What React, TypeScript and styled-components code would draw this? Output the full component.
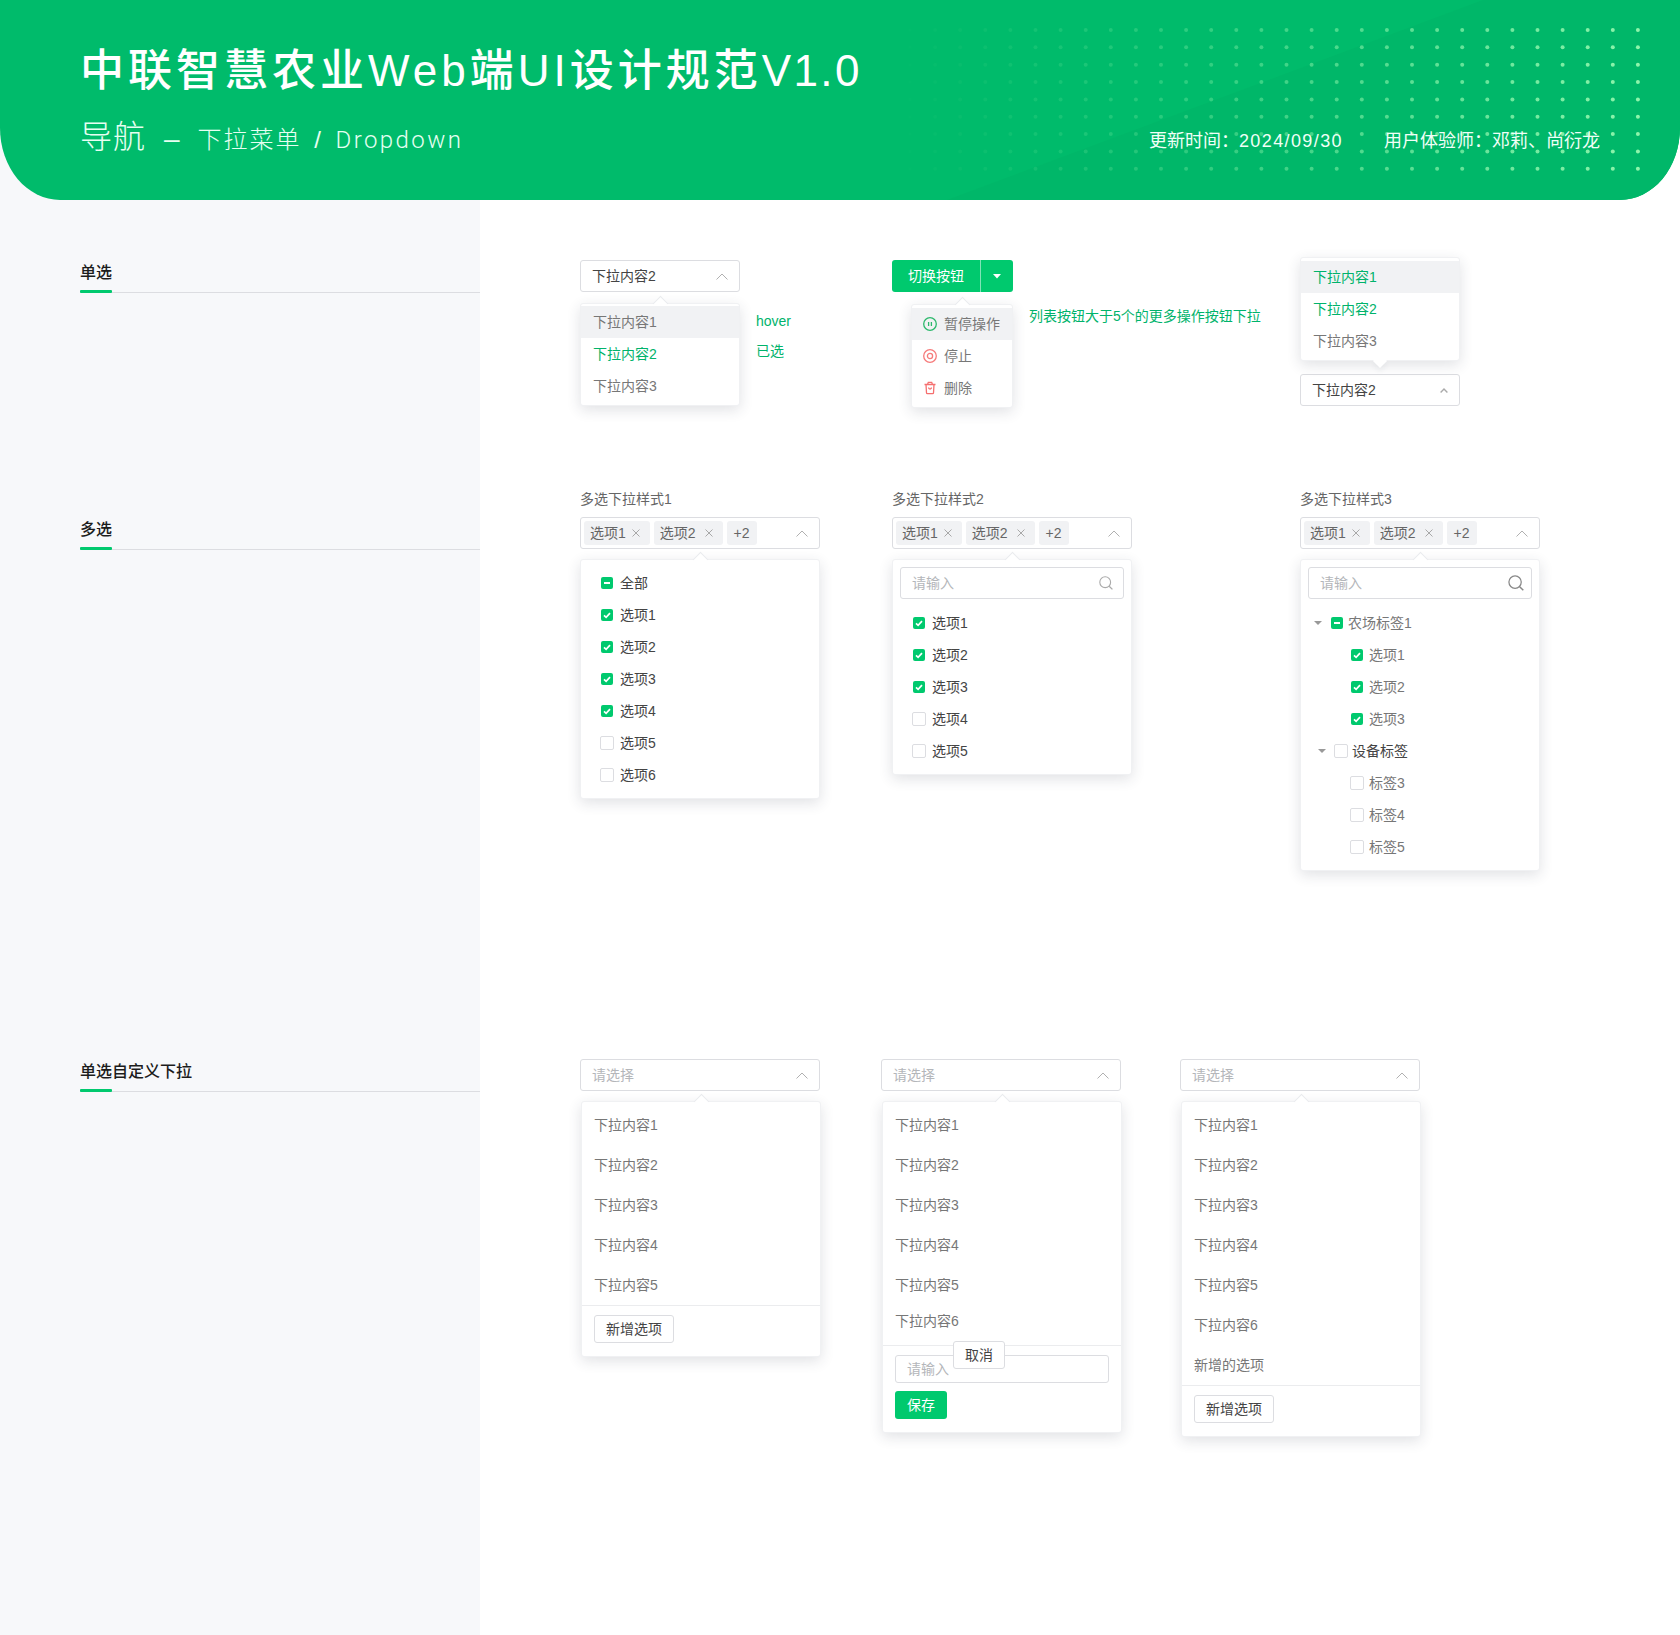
import React from "react";
import styled, { createGlobalStyle } from "styled-components";

const GREEN = "#00c96e";
const TEXT_GREEN = "#00b36b";

const GlobalStyle = createGlobalStyle`
	html, body {
		margin: 0;
		padding: 0;
		background: #fff;
	}
	* {
		box-sizing: border-box;
	}
	body {
		font-family: "Liberation Sans", "Noto Sans CJK SC", sans-serif;
		font-size: 14px;
		line-height: 20px;
		color: #444;
	}
`;

const Page = styled.div`
	width: 1680px;
	height: 1635px;
	overflow: hidden;
	background: linear-gradient(to right, #f7f8fa 480px, #fff 480px);
`;

const Header = styled.header`
	position: relative;
	height: 200px;
	padding-top: 43px;
	border-radius: 0 0 60px 60px / 0 0 72px 72px;
	background: #00bb6b;
	color: #fff;
	overflow: hidden;
`;

const Decor = styled.svg`
	position: absolute;
	top: 0;
	left: 0;
`;

const Title = styled.h1`
	position: relative;
	margin: 0;
	padding-left: 80px;
	font-size: 44px;
	line-height: 56px;
	font-weight: 500;
	letter-spacing: 4px;

	em {
		font-style: normal;
		letter-spacing: 2.4px;
	}
`;

const SubRow = styled.div`
	position: relative;
	display: flex;
	align-items: flex-start;
	justify-content: space-between;
	padding: 0 80px;
`;

const SubTitle = styled.div`
	display: flex;
	align-items: baseline;
	font-size: 24px;
	line-height: 76px;
	letter-spacing: 2px;
	word-spacing: 4px;
	white-space: pre;
	font-weight: 300;
	color: #e6fff2;

	b {
		font-size: 32px;
		font-weight: 300;
		letter-spacing: 1px;
		margin-right: 18px;
	}
	i {
		font-style: normal;
		font-size: 28px;
		margin-right: 16px;
	}
	em {
		font-family: Roboto, "Liberation Sans", sans-serif;
		font-style: normal;
		font-weight: 300;
		letter-spacing: 2.4px;
	}
`;

const Meta = styled.div`
	display: flex;
	gap: 41px;
	font-size: 18px;
	line-height: 84px;
	color: #f0fff7;

	em {
		font-style: normal;
		letter-spacing: 1.4px;
	}
`;

const Section = styled.section<{ $height: number; $side: number; $main: number }>`
	display: grid;
	grid-template-columns: 480px 1fr;
	height: ${(p) => p.$height}px;

	& > aside {
		padding: ${(p) => p.$side}px 0 0 80px;
	}
	& > main {
		padding: ${(p) => p.$main}px 0 0 100px;
	}
`;

const SideTitle = styled.h2`
	position: relative;
	height: 33px;
	margin: 0;
	font-size: 16px;
	line-height: 25px;
	font-weight: 500;
	color: #1c1c1c;
	border-bottom: 1px solid #dcdde1;

	&::after {
		content: "";
		position: absolute;
		left: 0;
		bottom: -1px;
		width: 32px;
		height: 3px;
		border-radius: 1px;
		background: ${GREEN};
	}
`;

const Columns = styled.div<{ $cols: string }>`
	display: grid;
	grid-template-columns: ${(p) => p.$cols};
	align-items: start;
`;

const Inline = styled.div`
	display: flex;
	align-items: flex-start;
`;

const Stack = styled.div<{ $width: number; $gap?: number; $top?: number }>`
	display: flex;
	flex-direction: column;
	gap: ${(p) => p.$gap ?? 0}px;
	width: ${(p) => p.$width}px;
	margin-top: ${(p) => p.$top ?? 0}px;
`;

const Notes = styled.div<{ $top: number }>`
	margin: ${(p) => p.$top}px 0 0 16px;
	color: ${TEXT_GREEN};
	line-height: 22px;

	p {
		margin: 0 0 8px;
	}
`;

const FieldLabel = styled.div`
	height: 22px;
	margin-bottom: 7px;
	line-height: 22px;
	color: #666;
`;

const SelectBox = styled.div<{ $placeholder?: boolean }>`
	display: flex;
	align-items: center;
	justify-content: space-between;
	height: 32px;
	padding: 0 11px;
	border: 1px solid #dcdde1;
	border-radius: 3px;
	background: #fff;
	color: ${(p) => (p.$placeholder ? "#b4b6ba" : "#444")};
`;

const TagBox = styled(SelectBox)`
	padding: 0 11px 0 3px;
`;

const Tags = styled.div`
	display: flex;
	gap: 4px;
`;

const Tag = styled.span<{ $gap?: number }>`
	display: flex;
	align-items: center;
	gap: ${(p) => p.$gap ?? 6}px;
	height: 24px;
	padding: 0 10px 0 6px;
	border-radius: 3px;
	background: #f1f2f4;
	color: #666;
`;

const CountTag = styled(Tag)`
	padding: 0 7px;
`;

const Menu = styled.div<{ $left?: number; $width: number; $top?: number; $pad?: string; $up?: boolean }>`
	position: relative;
	width: ${(p) => p.$width}px;
	margin-left: ${(p) => p.$left ?? 0}px;
	margin-top: ${(p) => p.$top ?? 10}px;
	padding: ${(p) => p.$pad ?? "2px 0 3px"};
	border: 1px solid #f0f1f3;
	border-radius: 3px;
	background: #fff;
	box-shadow: 0 4px 14px rgba(40, 50, 70, 0.14);

	&::before {
		content: "";
		position: absolute;
		left: 50%;
		width: 10px;
		height: 10px;
		margin-left: -5px;
		background: #fff;
		transform: rotate(45deg);
		${(p) =>
			p.$up
				? "bottom: -6px; box-shadow: 3px 3px 5px rgba(40, 50, 70, 0.05);"
				: "top: -6px; border-left: 1px solid #eaebee; border-top: 1px solid #eaebee;"}
	}
`;

const Item = styled.div<{ $hover?: boolean; $active?: boolean; $h?: number; $pad?: number; $after?: number }>`
	position: relative;
	display: flex;
	align-items: center;
	gap: 7px;
	height: ${(p) => p.$h ?? 32}px;
	margin-bottom: ${(p) => p.$after ?? 0}px;
	padding-left: ${(p) => p.$pad ?? 12}px;
	background: ${(p) => (p.$hover ? "#f1f2f4" : "transparent")};
	color: ${(p) => (p.$active ? TEXT_GREEN : "#777")};
`;

const SplitButton = styled.div`
	display: flex;
	width: 121px;
	height: 32px;
	border-radius: 3px;
	background: ${GREEN};
	color: #fff;
`;

const SplitLabel = styled.div`
	display: flex;
	align-items: center;
	justify-content: center;
	width: 89px;
	border-right: 1px solid rgba(255, 255, 255, 0.5);
`;

const SplitCaret = styled.div`
	display: flex;
	flex: 1;
	align-items: center;
	justify-content: center;
`;

const CheckRow = styled.div<{ $pad: number; $gap?: number; $muted?: boolean }>`
	display: flex;
	align-items: center;
	gap: ${(p) => p.$gap ?? 6}px;
	height: 32px;
	padding-left: ${(p) => p.$pad}px;
	color: ${(p) => (p.$muted ? "#777" : "#444")};
`;

const CheckSlot = styled.span`
	display: flex;
	align-items: center;
	justify-content: center;
	width: 14px;
	height: 14px;
`;

const EmptyBox = styled.span`
	width: 14px;
	height: 14px;
	border: 1px solid #dcdde1;
	border-radius: 2px;
	background: #fff;
`;

const FilledBox = styled.span`
	display: flex;
	align-items: center;
	justify-content: center;
	width: 12px;
	height: 12px;
	border-radius: 2px;
	background: ${GREEN};
`;

const TreeCaret = styled.span`
	width: 0;
	height: 0;
	margin-right: 4px;
	border-left: 4px solid transparent;
	border-right: 4px solid transparent;
	border-top: 4px solid #999;
`;

const SearchBox = styled.div<{ $right: number }>`
	display: flex;
	align-items: center;
	justify-content: space-between;
	width: 224px;
	height: 32px;
	margin: 0 0 8px 7px;
	padding: 0 ${(p) => p.$right}px 0 11px;
	border: 1px solid #dcdde1;
	border-radius: 3px;
	color: #b4b6ba;
`;

const Footer = styled.div`
	position: relative;
	display: flex;
	flex-direction: column;
	align-items: flex-start;
	gap: 8px;
	padding: 9px 12px 13px;
	border-top: 1px solid #ebecee;
`;

const GhostButton = styled.div`
	display: flex;
	align-items: center;
	justify-content: center;
	height: 28px;
	padding: 0 11px;
	border: 1px solid #dcdde1;
	border-radius: 3px;
	background: #fff;
	color: #444;
`;

const CancelButton = styled(GhostButton)`
	position: absolute;
	top: -5px;
	left: 70px;
	width: 52px;
`;

const SaveButton = styled(GhostButton)`
	width: 52px;
	border: 0;
	background: ${GREEN};
	color: #fff;
`;

const TextInput = styled.div`
	display: flex;
	align-items: center;
	width: 214px;
	height: 28px;
	padding-left: 11px;
	border: 1px solid #dcdde1;
	border-radius: 3px;
	color: #b4b6ba;
`;

const Chevron = ({ small }: { small?: boolean }) =>
	small ? (
		<svg width="8" height="5" viewBox="0 0 8 5" fill="none">
			<path d="M0.6 4.4 4 1 7.4 4.4" stroke="#aaa" strokeWidth="1.4" />
		</svg>
	) : (
		<svg width="12" height="7" viewBox="0 0 12 7" fill="none">
			<path d="M0.5 6.5 6 1 11.5 6.5" stroke="#b0b0b0" strokeWidth="1" />
		</svg>
	);

const Cross = () => (
	<svg width="8" height="8" viewBox="0 0 8 8" fill="none">
		<path d="M0.5 0.5 7.5 7.5M7.5 0.5 0.5 7.5" stroke="#a8a8a8" strokeWidth="1" />
	</svg>
);

const Tick = () => (
	<svg width="8" height="7" viewBox="0 0 8 7" fill="none">
		<path d="M1 3.4 3.1 5.4 7 1.2" stroke="#fff" strokeWidth="1.7" />
	</svg>
);

const Minus = () => (
	<svg width="6" height="2" viewBox="0 0 6 2">
		<rect width="6" height="2" fill="#fff" />
	</svg>
);

const SearchIcon = ({ size, color }: { size: number; color: string }) => (
	<svg width={size} height={size} viewBox="0 0 14 14" fill="none">
		<circle cx="6.2" cy="6.2" r="5.4" stroke={color} strokeWidth="1.1" />
		<path d="M10.2 10.2 13.4 13.4" stroke={color} strokeWidth="1.3" />
	</svg>
);

const PauseIcon = () => (
	<svg width="14" height="14" viewBox="0 0 14 14" fill="none">
		<circle cx="7" cy="7" r="6.3" stroke="#2cb86c" strokeWidth="1.3" />
		<path d="M5.6 5v4M8.4 5v4" stroke="#2cb86c" strokeWidth="1.3" />
	</svg>
);

const StopIcon = () => (
	<svg width="14" height="14" viewBox="0 0 14 14" fill="none">
		<circle cx="7" cy="7" r="6.3" stroke="#f67b7b" strokeWidth="1.3" />
		<circle cx="7" cy="7" r="2.6" stroke="#f67b7b" strokeWidth="1.3" />
	</svg>
);

const TrashIcon = () => (
	<svg width="14" height="14" viewBox="0 0 14 14" fill="none">
		<path
			d="M1.5 3.5h11M4.5 3.5l.8-2.2h3.4l.8 2.2M3 3.5l.5 8.2c0 .6.5 1 1 1h5c.5 0 1-.4 1-1l.5-8.2M5.6 6.5c0 2 2.8 2 2.8 0"
			stroke="#f56f6f"
			strokeWidth="1.3"
		/>
	</svg>
);

const HeaderDecor = () => {
	const cols = Array.from({ length: 30 }, (_, i) => 910 + i * 25.1);
	const rows = Array.from({ length: 9 }, (_, i) => 30 + i * 17.35);
	return (
		<Decor width="1680" height="200" viewBox="0 0 1680 200">
			<polygon points="947,200 1483,0 1680,0 1680,200" fill="#00b769" />
			{rows.map((y) =>
				cols.map((x) => (
					<circle
						key={`${x}-${y}`}
						cx={x}
						cy={y}
						r="2"
						fill="#8ff5ac"
						opacity={Math.min(1, Math.pow((x - 885) / 755, 1.25))}
					/>
				))
			)}
		</Decor>
	);
};

type Check = "on" | "off" | "part";

const CheckMark = ({ state }: { state: Check }) => (
	<CheckSlot>
		{state === "off" ? (
			<EmptyBox />
		) : (
			<FilledBox>{state === "on" ? <Tick /> : <Minus />}</FilledBox>
		)}
	</CheckSlot>
);

const MultiSelect = () => (
	<TagBox>
		<Tags>
			<Tag>
				选项1 <Cross />
			</Tag>
			<Tag $gap={9}>
				选项2 <Cross />
			</Tag>
			<CountTag>+2</CountTag>
		</Tags>
		<Chevron />
	</TagBox>
);

const plainChecks: [string, Check][] = [
	["全部", "part"],
	["选项1", "on"],
	["选项2", "on"],
	["选项3", "on"],
	["选项4", "on"],
	["选项5", "off"],
	["选项6", "off"],
];

const searchChecks: [string, Check][] = [
	["选项1", "on"],
	["选项2", "on"],
	["选项3", "on"],
	["选项4", "off"],
	["选项5", "off"],
];

const treeChildrenA: [string, Check][] = [
	["选项1", "on"],
	["选项2", "on"],
	["选项3", "on"],
];

const treeChildrenB: [string, Check][] = [
	["标签3", "off"],
	["标签4", "off"],
	["标签5", "off"],
];

const OptionList = ({ count, extra }: { count: number; extra?: string }) => (
	<>
		{Array.from({ length: count }, (_, i) => (
			<Item key={i} $h={40}>
				下拉内容{i + 1}
			</Item>
		))}
		{extra && <Item $h={40}>{extra}</Item>}
	</>
);

const App = () => (
	<Page>
		<GlobalStyle />
		<Header>
			<HeaderDecor />
			<Title>
				中联智慧农业Web端UI设计规范<em>V1.0</em>
			</Title>
			<SubRow>
				<SubTitle>
					<b>导航</b>
					<i>–</i>
					<span>下拉菜单 / </span>
					<em>Dropdown</em>
				</SubTitle>
				<Meta>
					<span>
						更新时间：<em>2024/09/30</em>
					</span>
					<span>用户体验师：邓莉、尚衍龙</span>
				</Meta>
			</SubRow>
		</Header>

		<Section $height={280} $side={60} $main={60}>
			<aside>
				<SideTitle>单选</SideTitle>
			</aside>
			<main>
				<Columns $cols="312px 408px 160px">
					<Inline>
						<Stack $width={160}>
							<SelectBox>
								下拉内容2
								<Chevron />
							</SelectBox>
							<Menu $width={160} $top={11}>
								<Item $hover>下拉内容1</Item>
								<Item $active>下拉内容2</Item>
								<Item>下拉内容3</Item>
							</Menu>
						</Stack>
						<Notes $top={50}>
							<p>hover</p>
							<p>已选</p>
						</Notes>
					</Inline>
					<Inline>
						<Stack $width={121}>
							<SplitButton>
								<SplitLabel>切换按钮</SplitLabel>
								<SplitCaret>
									<svg width="8" height="5" viewBox="0 0 8 5">
										<path d="M0 0h8L4 4.6z" fill="#fff" />
									</svg>
								</SplitCaret>
							</SplitButton>
							<Menu $width={102} $left={19} $top={12} $pad="3px 0">
								<Item $hover $pad={11}>
									<PauseIcon />
									暂停操作
								</Item>
								<Item $pad={11}>
									<StopIcon />
									停止
								</Item>
								<Item $pad={11}>
									<TrashIcon />
									删除
								</Item>
							</Menu>
						</Stack>
						<Notes $top={45}>列表按钮大于5个的更多操作按钮下拉</Notes>
					</Inline>
					<Stack $width={160} $top={-3} $gap={13}>
						<Menu $width={160} $top={0} $pad="3px 0" $up>
							<Item $hover $active>
								下拉内容1
							</Item>
							<Item $active>下拉内容2</Item>
							<Item>下拉内容3</Item>
						</Menu>
						<SelectBox>
							下拉内容2
							<Chevron small />
						</SelectBox>
					</Stack>
				</Columns>
			</main>
		</Section>

		<Section $height={520} $side={37} $main={8}>
			<aside>
				<SideTitle>多选</SideTitle>
			</aside>
			<main>
				<Columns $cols="312px 408px 240px">
					<Stack $width={240}>
						<FieldLabel>多选下拉样式1</FieldLabel>
						<MultiSelect />
						<Menu $width={240} $pad="7px 0">
							{plainChecks.map(([label, state]) => (
								<CheckRow key={label} $pad={19}>
									<CheckMark state={state} />
									{label}
								</CheckRow>
							))}
						</Menu>
					</Stack>
					<Stack $width={240}>
						<FieldLabel>多选下拉样式2</FieldLabel>
						<MultiSelect />
						<Menu $width={240} $pad="7px 0">
							<SearchBox $right={10}>
								请输入
								<SearchIcon size={14} color="#aaa" />
							</SearchBox>
							{searchChecks.map(([label, state]) => (
								<CheckRow key={label} $pad={19}>
									<CheckMark state={state} />
									{label}
								</CheckRow>
							))}
						</Menu>
					</Stack>
					<Stack $width={240}>
						<FieldLabel>多选下拉样式3</FieldLabel>
						<MultiSelect />
						<Menu $width={240} $pad="7px 0">
							<SearchBox $right={7}>
								请输入
								<SearchIcon size={16} color="#888" />
							</SearchBox>
							<CheckRow $pad={13} $gap={4} $muted>
								<TreeCaret />
								<CheckMark state="part" />
								农场标签1
							</CheckRow>
							{treeChildrenA.map(([label, state]) => (
								<CheckRow key={label} $pad={49} $gap={5} $muted>
									<CheckMark state={state} />
									{label}
								</CheckRow>
							))}
							<CheckRow $pad={17} $gap={4}>
								<TreeCaret />
								<CheckMark state="off" />
								设备标签
							</CheckRow>
							{treeChildrenB.map(([label, state]) => (
								<CheckRow key={label} $pad={49} $gap={5} $muted>
									<CheckMark state={state} />
									{label}
								</CheckRow>
							))}
						</Menu>
					</Stack>
				</Columns>
			</main>
		</Section>

		<Section $height={635} $side={59} $main={59}>
			<aside>
				<SideTitle>单选自定义下拉</SideTitle>
			</aside>
			<main>
				<Columns $cols="301px 299px 240px">
					<Stack $width={240}>
						<SelectBox $placeholder>
							请选择
							<Chevron />
						</SelectBox>
						<Menu $width={240} $left={1} $pad="3px 0 0">
							<OptionList count={5} />
							<Footer>
								<GhostButton>新增选项</GhostButton>
							</Footer>
						</Menu>
					</Stack>
					<Stack $width={240}>
						<SelectBox $placeholder>
							请选择
							<Chevron />
						</SelectBox>
						<Menu $width={240} $left={1} $pad="3px 0 0">
							<OptionList count={5} />
							<Item $h={32} $after={8}>
								下拉内容6
							</Item>
							<Footer>
								<TextInput>请输入</TextInput>
								<SaveButton>保存</SaveButton>
								<CancelButton>取消</CancelButton>
							</Footer>
						</Menu>
					</Stack>
					<Stack $width={240}>
						<SelectBox $placeholder>
							请选择
							<Chevron />
						</SelectBox>
						<Menu $width={240} $left={1} $pad="3px 0 0">
							<OptionList count={6} extra="新增的选项" />
							<Footer>
								<GhostButton>新增选项</GhostButton>
							</Footer>
						</Menu>
					</Stack>
				</Columns>
			</main>
		</Section>
	</Page>
);

export default App;
